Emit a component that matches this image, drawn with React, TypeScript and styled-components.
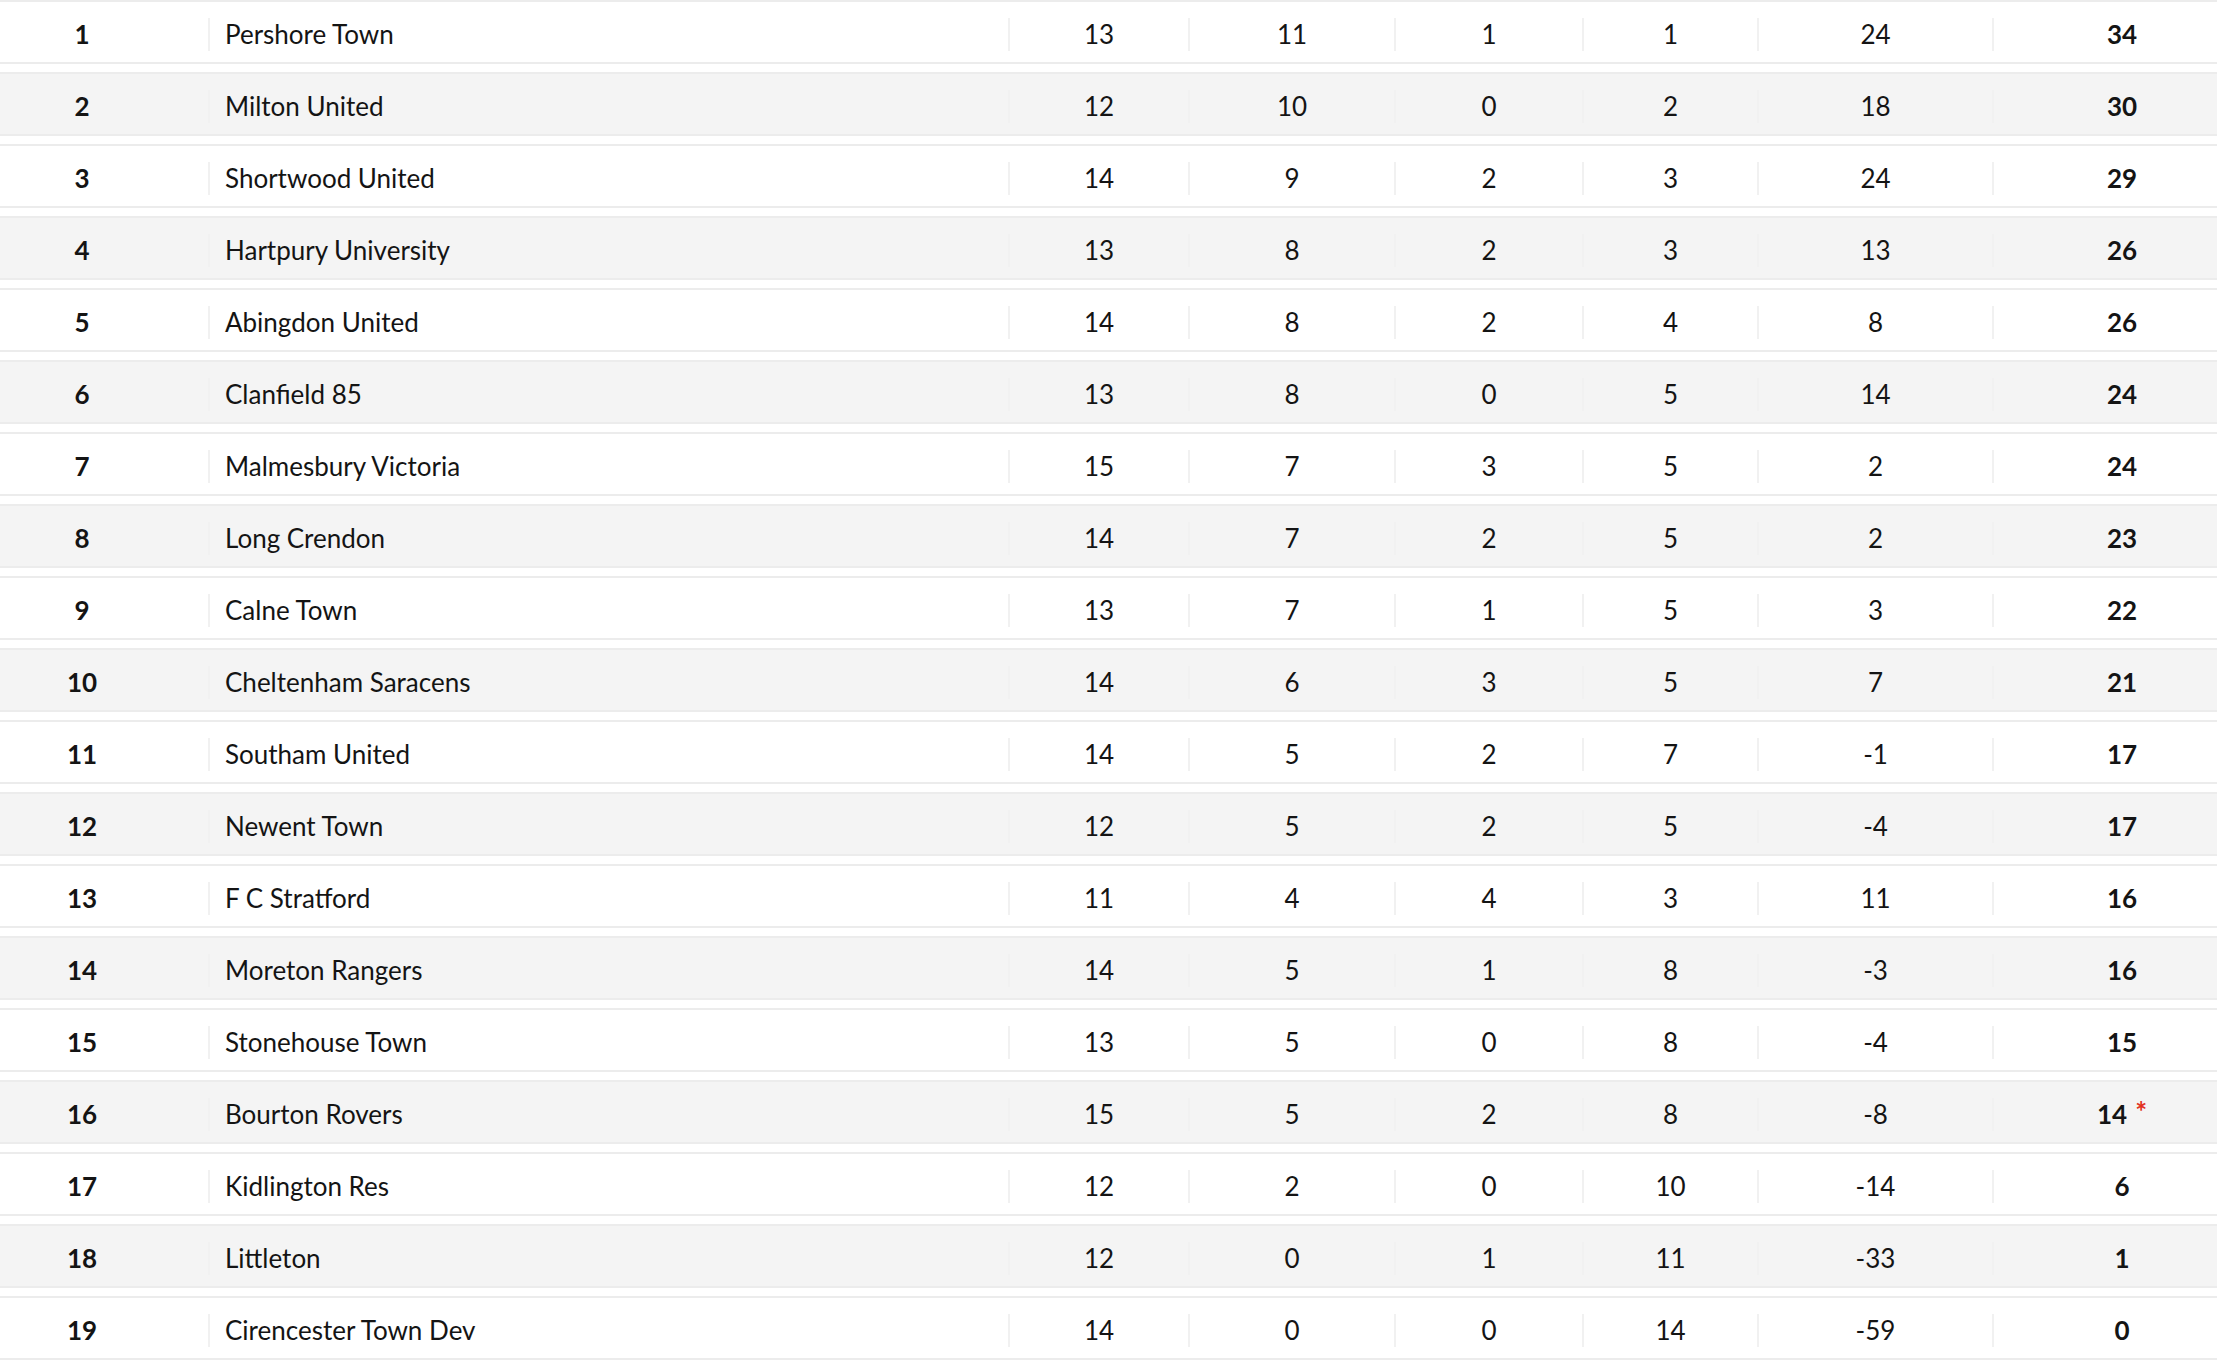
import React from "react";
import styled, { createGlobalStyle } from "styled-components";

const GlobalStyle = createGlobalStyle`
  html, body {
    margin: 0;
    padding: 0;
    background: #ffffff;
  }
  body {
    font-family: Lato, "Noto Sans", "Liberation Sans", sans-serif;
    color: #141414;
  }
`;

type Team = {
  pos: number;
  name: string;
  p: number;
  w: number;
  d: number;
  l: number;
  gd: number;
  pts: number;
  deducted?: boolean;
};

const teams: Team[] = [
  { pos: 1, name: "Pershore Town", p: 13, w: 11, d: 1, l: 1, gd: 24, pts: 34 },
  { pos: 2, name: "Milton United", p: 12, w: 10, d: 0, l: 2, gd: 18, pts: 30 },
  { pos: 3, name: "Shortwood United", p: 14, w: 9, d: 2, l: 3, gd: 24, pts: 29 },
  { pos: 4, name: "Hartpury University", p: 13, w: 8, d: 2, l: 3, gd: 13, pts: 26 },
  { pos: 5, name: "Abingdon United", p: 14, w: 8, d: 2, l: 4, gd: 8, pts: 26 },
  { pos: 6, name: "Clanfield 85", p: 13, w: 8, d: 0, l: 5, gd: 14, pts: 24 },
  { pos: 7, name: "Malmesbury Victoria", p: 15, w: 7, d: 3, l: 5, gd: 2, pts: 24 },
  { pos: 8, name: "Long Crendon", p: 14, w: 7, d: 2, l: 5, gd: 2, pts: 23 },
  { pos: 9, name: "Calne Town", p: 13, w: 7, d: 1, l: 5, gd: 3, pts: 22 },
  { pos: 10, name: "Cheltenham Saracens", p: 14, w: 6, d: 3, l: 5, gd: 7, pts: 21 },
  { pos: 11, name: "Southam United", p: 14, w: 5, d: 2, l: 7, gd: -1, pts: 17 },
  { pos: 12, name: "Newent Town", p: 12, w: 5, d: 2, l: 5, gd: -4, pts: 17 },
  { pos: 13, name: "F C Stratford", p: 11, w: 4, d: 4, l: 3, gd: 11, pts: 16 },
  { pos: 14, name: "Moreton Rangers", p: 14, w: 5, d: 1, l: 8, gd: -3, pts: 16 },
  { pos: 15, name: "Stonehouse Town", p: 13, w: 5, d: 0, l: 8, gd: -4, pts: 15 },
  { pos: 16, name: "Bourton Rovers", p: 15, w: 5, d: 2, l: 8, gd: -8, pts: 14, deducted: true },
  { pos: 17, name: "Kidlington Res", p: 12, w: 2, d: 0, l: 10, gd: -14, pts: 6 },
  { pos: 18, name: "Littleton", p: 12, w: 0, d: 1, l: 11, gd: -33, pts: 1 },
  { pos: 19, name: "Cirencester Town Dev", p: 14, w: 0, d: 0, l: 14, gd: -59, pts: 0 },
];

const Table = styled.div`
  display: flex;
  flex-direction: column;
  gap: 8px;
  width: 2217px;
`;

const Row = styled.div<{ $shaded: boolean }>`
  display: grid;
  grid-template-columns: 208px 800px 180px 206px 188px 175px 235px 1fr;
  align-items: center;
  height: 60px;
  border-top: 2px solid #ececec;
  border-bottom: 2px solid #ececec;
  background: ${(p) => (p.$shaded ? "#f4f4f4" : "#ffffff")};
`;

const Cell = styled.div<{ $bold?: boolean }>`
  height: 33px;
  line-height: 33px;
  margin-top: 4px;
  font-size: 26px;
  font-weight: ${(p) => (p.$bold ? 700 : 400)};
  text-align: center;
  white-space: nowrap;
  border-left: 2px solid #f1f1f1;
`;

const PosCell = styled(Cell)`
  border-left: none;
  padding-right: 44px;
`;

const NameCell = styled(Cell)`
  text-align: left;
  padding-left: 15px;
`;

const PtsCell = styled(Cell)`
  padding-left: 33px;
`;

const Star = styled.span`
  color: #e2321f;
  font-weight: 700;
  font-size: 28px;
  line-height: 0;
  margin-left: 8px;
  vertical-align: 2px;
`;

export default function App() {
  return (
    <>
      <GlobalStyle />
      <Table>
        {teams.map((t, i) => (
          <Row key={t.pos} $shaded={i % 2 === 1}>
            <PosCell $bold>{t.pos}</PosCell>
            <NameCell>{t.name}</NameCell>
            <Cell>{t.p}</Cell>
            <Cell>{t.w}</Cell>
            <Cell>{t.d}</Cell>
            <Cell>{t.l}</Cell>
            <Cell>{t.gd}</Cell>
            <PtsCell $bold>
              {t.pts}
              {t.deducted && <Star>*</Star>}
            </PtsCell>
          </Row>
        ))}
      </Table>
    </>
  );
}
